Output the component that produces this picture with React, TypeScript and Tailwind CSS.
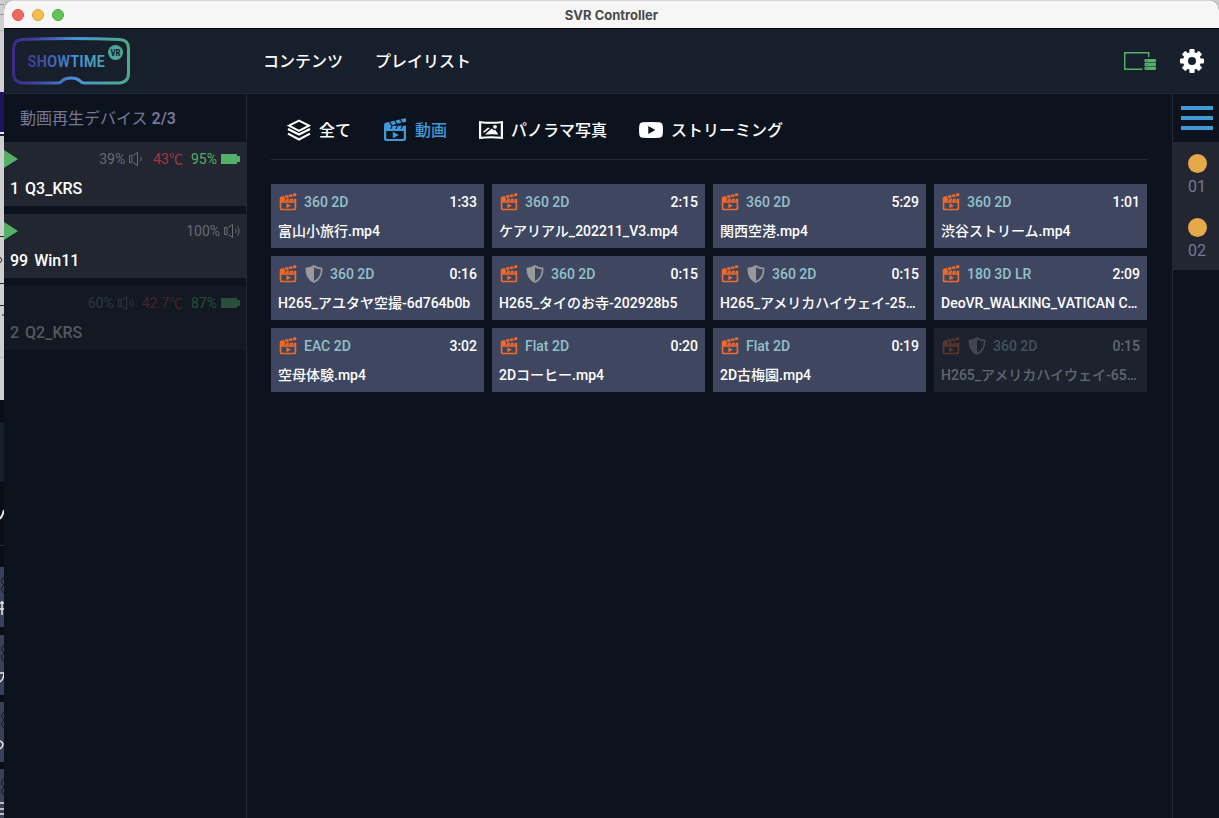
import { clsx } from 'clsx';

interface Device {
  id: string;
  name: string;
  volume: string;
  waves: number;
  temperature?: string;
  battery?: string;
  playing: boolean;
  online: boolean;
}

interface Video {
  format: string;
  duration: string;
  title: string;
  secured?: boolean;
  disabled?: boolean;
}

const devices: Device[] = [
  { id: '1', name: 'Q3_KRS', volume: '39%', waves: 1, temperature: '43℃', battery: '95%', playing: true, online: true },
  { id: '99', name: 'Win11', volume: '100%', waves: 2, playing: true, online: true },
  { id: '2', name: 'Q2_KRS', volume: '60%', waves: 2, temperature: '42.7℃', battery: '87%', playing: false, online: false },
];

const videos: Video[] = [
  { format: '360 2D', duration: '1:33', title: '富山小旅行.mp4' },
  { format: '360 2D', duration: '2:15', title: 'ケアリアル_202211_V3.mp4' },
  { format: '360 2D', duration: '5:29', title: '関西空港.mp4' },
  { format: '360 2D', duration: '1:01', title: '渋谷ストリーム.mp4' },
  { format: '360 2D', duration: '0:16', title: 'H265_アユタヤ空撮-6d764b0b', secured: true },
  { format: '360 2D', duration: '0:15', title: 'H265_タイのお寺-202928b5', secured: true },
  { format: '360 2D', duration: '0:15', title: 'H265_アメリカハイウェイ-25…', secured: true },
  { format: '180 3D LR', duration: '2:09', title: 'DeoVR_WALKING_VATICAN C…' },
  { format: 'EAC 2D', duration: '3:02', title: '空母体験.mp4' },
  { format: 'Flat 2D', duration: '0:20', title: '2Dコーヒー.mp4' },
  { format: 'Flat 2D', duration: '0:19', title: '2D古梅園.mp4' },
  { format: '360 2D', duration: '0:15', title: 'H265_アメリカハイウェイ-65…', secured: true, disabled: true },
];

const tabs = [
  { label: '全て', icon: LayersIcon },
  { label: '動画', icon: ClapperIcon, active: true },
  { label: 'パノラマ写真', icon: PanoramaIcon },
  { label: 'ストリーミング', icon: StreamIcon },
];

function LayersIcon({ className }: { className?: string }) {
  return (
    <svg viewBox="0 0 24 24" className={className} fill="none" stroke="currentColor" strokeWidth="2">
      <path d="M12 2.6 22 7.6 12 12.8 2 7.6Z" />
      <path d="M1 11 12 16.6 23 11M1 15.6 12 21.4 23 15.6" strokeWidth="2.2" />
    </svg>
  );
}

function ClapperIcon({ className }: { className?: string }) {
  return (
    <svg viewBox="0 0 24 24" className={className} fill="currentColor">
      <path d="M1 7.4Q.8 5 3 4.600L6 4 8 7.400H8.600L7 11.500H1Z" />
      <path d="m7.200 3.700 4-.9 2 3.200-4 .9ZM12.400 2.500l4-.9 2 3.200-4 .9ZM17.600 1.300l4-.9L23 .2v3.600l-3.400.7Z" />
      <path d="M9.800 7.800h4L12.200 11.200h-4ZM15 7.800h4l-1.600 3.400h-4ZM20.200 7.800H23v3.400h-4.400Z" />
      <path
        fillRule="evenodd"
        d="M1 11h22v9.500q0 2.500-2.500 2.500h-17Q1 23 1 20.500ZM3.200 12.900v7q0 1 1 1h15.600q1 0 1-1v-7Z"
      />
      <path d="m9.800 13.800 6 3.200-6 3.200Z" />
    </svg>
  );
}

function PanoramaIcon({ className }: { className?: string }) {
  return (
    <svg viewBox="0 0 24 24" className={className} fill="currentColor">
      <path
        fillRule="evenodd"
        d="M0 3q12 1.700 24 0v18q-12-1.700-24 0ZM2.200 5.200v13.600q9.800-1.300 19.600 0V5.200q-9.800 1.300-19.600 0Z"
      />
      <circle cx="16" cy="8.800" r="1.900" />
      <path d="m6 16.600 6.800-6.200 2 2 1.200-.8 3.400 5q-6.700-.6-13.400 0ZM3.800 14l5.200-4.600 1.800.8L5.400 14.600Z" />
    </svg>
  );
}

function StreamIcon({ className }: { className?: string }) {
  return (
    <svg viewBox="0 0 24 24" className={className} fill="currentColor">
      <path
        fillRule="evenodd"
        d="M4 4.200Q12 3.700 20 4.200q3.400.2 3.700 3.400.5 4.400 0 8.800-.3 3.200-3.700 3.400-8 .5-16 0-3.400-.2-3.700-3.400-.5-4.400 0-8.800Q.6 4.400 4 4.200ZM9.300 8v8l7-4Z"
      />
    </svg>
  );
}

function ShieldIcon({ className }: { className?: string }) {
  return (
    <svg viewBox="0 0 18 18" className={className} fill="currentColor">
      <path
        fillRule="evenodd"
        d="M9 0q4 2.700 8.500 2.800Q18 14 9 18 0 14 .5 2.800 5 2.700 9 0ZM9 2.200V16q6.800-3.400 6.800-11.700Q12 4 9 2.200Z"
      />
    </svg>
  );
}

function SpeakerIcon({ waves }: { waves: number }) {
  return (
    <svg viewBox="0 0 16 14" className="h-3.5 w-4" fill="none" stroke="currentColor">
      <path d="M.5 3.500v7h2.500v-7ZM4 3.500l4.500-3v13l-4.500-3" />
      <path d="M11.500 5q1.400 2 0 4" />
      {waves > 1 && <path d="M13.300 2.500q3.600 4.500 0 9" />}
    </svg>
  );
}

function BatteryIcon() {
  return (
    <svg viewBox="0 0 19 10" className="h-2.5 w-[19px]" fill="currentColor">
      <path d="M0 0h16v2h3v6h-3v2H0Z" />
    </svg>
  );
}

function ServerScreenIcon() {
  return (
    <svg viewBox="0 0 32 18" className="h-[18px] w-8" fill="none" stroke="currentColor">
      <path d="M18.500 17.300H.7V.7h24v4.300" strokeWidth="1.500" />
      <g fill="currentColor" stroke="none">
        <rect x="20.500" y="7" width="11.500" height="3.300" rx=".8" />
        <rect x="20.500" y="10.800" width="11.500" height="3.300" rx=".8" />
        <rect x="20.500" y="14.600" width="11.500" height="3.300" rx=".8" />
      </g>
      <path d="M22 8.600h1.500M22 12.500h1.500M22 16.300h1.500" stroke="#2f6144" strokeWidth=".7" />
    </svg>
  );
}

function GearIcon() {
  return (
    <svg viewBox="-12 -12 24 24" className="size-6" fill="currentColor">
      {[0, 45, 90, 135].map((angle) => (
        <rect key={angle} x="-2.600" y="-12" width="5.200" height="24" rx="1" transform={`rotate(${angle})`} />
      ))}
      <circle r="9" />
      <circle r="4" fill="#171f2d" />
    </svg>
  );
}

function Logo() {
  return (
    <svg viewBox="0 0 118 48" className="h-12 w-[118px]" role="img" aria-label="SHOWTIME VR">
      <defs>
        <linearGradient id="brand" gradientUnits="userSpaceOnUse" x1="0" y1="0" x2="118" y2="0">
          <stop offset="0" stopColor="#3b2a86" />
          <stop offset=".22" stopColor="#40479f" />
          <stop offset=".55" stopColor="#4a94d6" />
          <stop offset=".85" stopColor="#4ba69c" />
          <stop offset="1" stopColor="#4cab88" />
        </linearGradient>
      </defs>
      <path
        d="M10 2.600Q59 .6 108 2.600 116.500 3.200 116.500 11.500V36Q116.500 45.500 107 46H72.500Q69.500 46 67.500 43.500 64.500 41 59 41 53.500 41 50.500 43.500 48.500 46 45.500 46H11Q1.500 45.500 1.500 36V11.500Q1.500 3.200 10 2.600Z"
        fill="none"
        stroke="url(#brand)"
        strokeWidth="3"
      />
      <text
        x="15.500"
        y="30"
        fill="url(#brand)"
        className="font-['Liberation_Sans_Narrow','Roboto_Condensed','Roboto'] text-[17px] font-medium"
      >
        SHOWTIME
      </text>
      <circle cx="103.500" cy="15.500" r="7.500" fill="url(#brand)" />
      <text
        x="103.500"
        y="19"
        textAnchor="middle"
        fill="#171f2d"
        className="font-['Liberation_Sans_Narrow','Roboto_Condensed','Roboto'] text-[9px] font-bold"
      >
        VR
      </text>
    </svg>
  );
}

// Sliver of the desktop that shows to the left of the window
function DesktopEdge() {
  return (
    <svg viewBox="0 0 4 818" className="h-[818px] w-1 shrink-0" aria-hidden="true">
      <rect width="4" height="818" fill="#0a0d14" />
      <rect width="4" height="400" fill="#cfcfcf" />
      <path d="M0 4.500h4M0 14.500h4" stroke="#999" />
      <rect y="30" width="4" height="1" fill="#b5b5b5" />
      <rect y="92" width="4" height="44" fill="#21145a" />
      <rect y="132" width="4" height="2" fill="#e8e8e8" />
      <path d="M0 236.500h4M0 283.500h4M0 305.500h4" stroke="#222" />
      <path d="m0 257 2 3-2 3M2 315h2" stroke="#222" fill="none" />
      <rect y="357" width="4" height="1" fill="#b5b5b5" />
      <rect y="422" width="4" height="60" fill="#171f2d" />
      <path d="M4 510q-1 5-4 9" stroke="#e8e8e8" strokeWidth="2" fill="none" />
      <path d="M0 545.500h4" stroke="#262b38" />
      {[567, 635, 702, 769].map((y) => (
        <g key={y}>
          <rect y={y} width="4" height={y === 769 ? 49 : 60} fill="#3a4058" />
          <path d={`M4 ${y + 10}q-5 4 0 8q-5 4 0 8`} stroke="#101722" fill="none" />
        </g>
      ))}
      <path d="M0 603h4M0 609h4M2 601v14M0 673h4q0 6-4 9M0 741q6 3 0 8M0 803h4M0 809h4M0 814h4" stroke="#e8e8e8" strokeWidth="1.500" fill="none" />
    </svg>
  );
}

function DeviceRow({ device }: { device: Device }) {
  return (
    <li className={clsx('h-16 pt-[7px]', device.online ? 'bg-[#212630]' : 'bg-[#121922]')}>
      <div className="flex h-5 items-center justify-between pr-1.5 text-sm leading-5">
        <span className="text-[#55b068]">
          {device.playing && (
            <svg viewBox="0 0 14 18" className="h-[18px] w-3.5" fill="currentColor">
              <path d="M0 0 14 9 0 18Z" />
            </svg>
          )}
        </span>
        <div className={clsx('flex items-center gap-2', !device.online && 'opacity-35')}>
          <span className="flex items-center gap-1 text-[#686c74]">
            {device.volume}
            <SpeakerIcon waves={device.waves} />
          </span>
          {device.temperature && <span className="text-[#a83444]">{device.temperature}</span>}
          {device.battery && (
            <span className="flex items-center gap-1 text-[#55b068]">
              {device.battery}
              <BatteryIcon />
            </span>
          )}
        </div>
      </div>
      <div
        className={clsx(
          'mt-2.5 flex h-5 items-center gap-1.5 pl-1.5 text-base leading-5 font-medium',
          device.online ? 'text-white' : 'text-[#54585f]',
        )}
      >
        <span>{device.id}</span>
        <span>{device.name}</span>
      </div>
    </li>
  );
}

function VideoCard({ video }: { video: Video }) {
  return (
    <button
      type="button"
      disabled={video.disabled}
      className={clsx(
        'h-16 min-w-0 px-[7px] pt-2 pb-[7px] text-left text-sm leading-5 font-medium',
        video.disabled ? 'bg-[#1c222e]' : 'bg-[#3f4760]',
      )}
    >
      <span className={clsx('block', video.disabled && 'opacity-30')}>
        <span className="flex h-5 items-center gap-2">
          <ClapperIcon className="ml-px size-[18px] text-[#f26a28]" />
          {video.secured && <ShieldIcon className="size-[18px] text-[#999999]" />}
          <span className="-ml-px text-[#93c0cb]">{video.format}</span>
          <span className="ml-auto text-white">{video.duration}</span>
        </span>
        <span className="mt-[9px] block h-5 truncate text-white">{video.title}</span>
      </span>
    </button>
  );
}

export default function App() {
  return (
    <div className="flex min-h-screen overflow-hidden bg-[#c9c9c9] font-['Roboto','Noto_Sans_CJK_JP',sans-serif]">
      <div className="flex h-screen w-1 shrink-0 overflow-hidden">
        <DesktopEdge />
      </div>

      <div className="flex min-w-0 flex-1 flex-col overflow-hidden rounded-t-[10px] bg-[#0c131c]">
        {/* Title bar */}
        <div className="flex h-[29px] items-center border-t border-b border-t-[#d4d4d4] border-b-black bg-[#f6f6f6] px-2">
          <div className="flex flex-1 gap-2">
            <button type="button" aria-label="閉じる" className="size-3 rounded-full border border-[#d9544a] bg-[#ed6a5f]" />
            <button type="button" aria-label="しまう" className="size-3 rounded-full border border-[#dba43c] bg-[#f5bf4f]" />
            <button type="button" aria-label="拡大" className="size-3 rounded-full border border-[#52ab42] bg-[#61c555]" />
          </div>
          <h1 className="font-['Inter',sans-serif] text-[13px] leading-5 font-bold text-[#4a4a4a]">SVR Controller</h1>
          <div className="flex-1" />
        </div>

        {/* Header */}
        <header className="flex h-[65px] items-center border-b border-[#222934] bg-[#171f2d] pr-[15px] pl-2 text-white">
          <div className="w-[251px]">
            <Logo />
          </div>
          <nav className="flex gap-8 pt-0.5 text-base leading-6 font-medium">
            <a href="#contents">コンテンツ</a>
            <a href="#playlists">プレイリスト</a>
          </nav>
          <div className="ml-auto flex items-center gap-6">
            <button type="button" aria-label="サーバー" className="text-[#55b068]">
              <ServerScreenIcon />
            </button>
            <button type="button" aria-label="設定">
              <GearIcon />
            </button>
          </div>
        </header>

        <div className="flex flex-1">
          {/* Devices */}
          <aside className="w-[243px] shrink-0 border-r border-[#222934]">
            <h2 className="flex h-12 items-center gap-1 pt-0.5 pl-4 text-base leading-6 text-[#77779a]">
              動画再生デバイス <span className="font-semibold">2/3</span>
            </h2>
            <ul className="flex flex-col gap-2">
              {devices.map((device) => (
                <DeviceRow key={device.id} device={device} />
              ))}
            </ul>
          </aside>

          {/* Library */}
          <main className="min-w-0 flex-1 px-6">
            <div className="flex h-[66px] items-center gap-8 border-b border-[#222934] px-4 pb-1.5 pt-3">
              {tabs.map((tab) => {
                const Icon = tab.icon;

                return (
                  <button
                    key={tab.label}
                    type="button"
                    className={clsx(
                      'flex items-center gap-2 text-base leading-6 font-medium',
                      tab.active ? 'text-[#4299d8]' : 'text-white',
                    )}
                  >
                    <Icon className="size-6" />
                    <span className="pt-0.5">{tab.label}</span>
                  </button>
                );
              })}
            </div>
            <div className="grid grid-cols-4 gap-2 pt-6 pr-px">
              {videos.map((video) => (
                <VideoCard key={video.title} video={video} />
              ))}
            </div>
          </main>

          {/* Groups */}
          <aside className="w-[47px] shrink-0 border-l border-[#222934]">
            <button type="button" aria-label="メニュー" className="flex h-12 w-full flex-col justify-center gap-1.5 pr-1.5 pl-2">
              <span className="h-1 w-full bg-[#4299d8]" />
              <span className="h-1 w-full bg-[#4299d8]" />
              <span className="h-1 w-full bg-[#4299d8]" />
            </button>
            <ul className="bg-[#212630]">
              {['01', '02'].map((group) => (
                <li key={group} className="flex h-16 flex-col items-center gap-1 pt-3 pl-0.5">
                  <span className="size-[19px] shrink-0 rounded-full bg-[#e5a84a]" />
                  <span className="text-base leading-5 text-[#77779a]">{group}</span>
                </li>
              ))}
            </ul>
          </aside>
        </div>
      </div>
    </div>
  );
}
